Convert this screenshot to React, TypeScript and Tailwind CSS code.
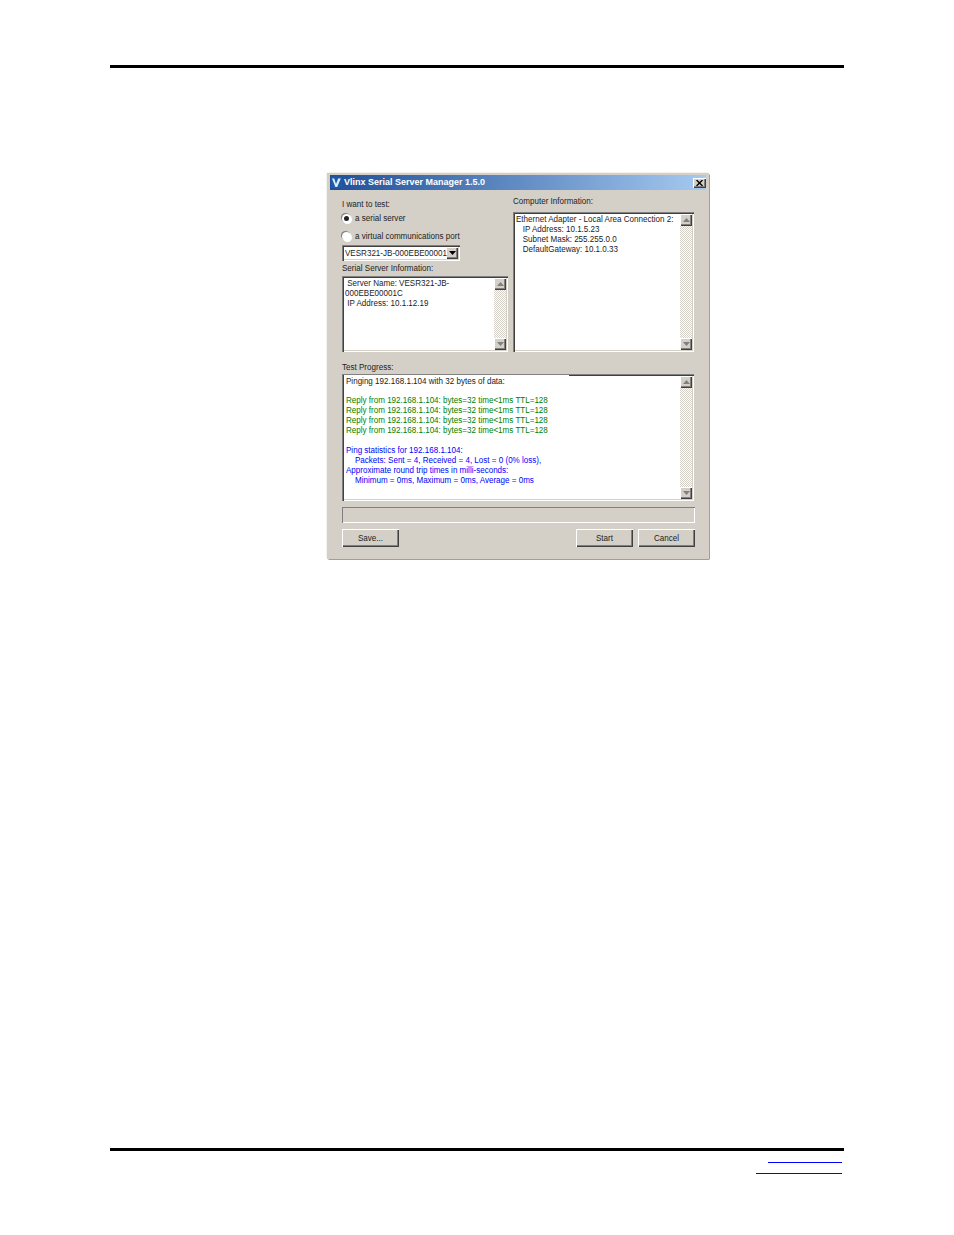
import type { ReactNode } from 'react';

const sunken = 'bg-white shadow-[inset_1px_1px_0_#808080,inset_2px_2px_0_#404040,inset_-1px_-1px_0_#ffffff,inset_-2px_-2px_0_#d4d0c8]';
const raised = 'bg-[#d4d0c8] shadow-[inset_1px_1px_0_#ffffff,inset_-1px_-1px_0_#404040,inset_-2px_-2px_0_#808080]';
const tall = 'scale-y-[1.15] leading-[10px]';
const label = 'translate-y-[1px] scale-y-[1.15] leading-[10px]';

function Arrow({ up = false, dark = false }: { up?: boolean; dark?: boolean }) {
  return (
    <svg width="7" height="4" viewBox="0 0 7 4" className={dark ? 'text-black' : 'text-[#808080]'}>
      <path d={up ? 'M3.5 0L7 4H0z' : 'M0 0h7L3.5 4z'} fill="currentColor" />
    </svg>
  );
}

function ScrollBar() {
  return (
    <div className="flex w-[12px] shrink-0 flex-col bg-[repeating-conic-gradient(#ffffff_0_25%,#d4d0c8_0_50%)] bg-[length:2px_2px]">
      <div className={`flex h-[12px] items-center justify-center ${raised}`}>
        <Arrow up />
      </div>
      <div className="flex-1" />
      <div className={`flex h-[12px] items-center justify-center ${raised}`}>
        <Arrow />
      </div>
    </div>
  );
}

function TextBox({ className, textClass = 'pl-[1px] pt-[1px]', children }: { className: string; textClass?: string; children: ReactNode }) {
  return (
    <div className={`flex p-[2px] ${sunken} ${className}`}>
      <div className={`min-w-0 flex-1 ${textClass}`}>{children}</div>
      <ScrollBar />
    </div>
  );
}

function Line({ children }: { children?: ReactNode }) {
  return <div className={`h-[9.9px] whitespace-pre ${tall}`}>{children}</div>;
}

function Radio({ checked = false }: { checked?: boolean }) {
  return (
    <div className="flex h-[9px] w-[9px] items-center justify-center rounded-full bg-white shadow-[-1px_-1px_0_#808080,1px_1px_0_#ffffff]">
      {checked && <div className="h-[5px] w-[5px] rounded-full bg-[#222]" />}
    </div>
  );
}

function Button({ text }: { text: string }) {
  return (
    <button className={`flex h-[18px] w-[57px] items-center justify-center text-[#222] ${raised}`}>
      <span className={label}>{text}</span>
    </button>
  );
}

function Dialog() {
  return (
    <div className="ml-[327px] mt-[105px] h-[386px] w-[382px] border-[3px] border-[#d4d0c8] bg-[#d4d0c8] font-['Liberation_Sans',sans-serif] text-[8.05px] text-[#222] shadow-[1px_1px_0_-0.5px_#404040,-1px_-1px_0_-0.5px_#e8e6e0]">
      <div className="mt-[-1px] flex h-[15px] items-center bg-gradient-to-r from-[#1f4f96] to-[#a6caf0] pl-[1px]">
        <svg width="11" height="11" viewBox="0 0 11 11" className="shrink-0">
          <rect width="11" height="11" fill="#1f5aa8" />
          <path d="M1 1.5h2.2L5 7l2.2-5.5h2.6L6.2 10H4.4z" fill="#d8f0ff" />
        </svg>
        <span className="ml-[2px] text-[9px] font-bold text-white">Vlinx Serial Server Manager 1.5.0</span>
        <div className={`ml-auto flex h-[10px] w-[13px] items-center justify-center ${raised}`}>
          <svg width="7" height="6" viewBox="0 0 7 6">
            <path d="M0.5 0L6.5 6M6.5 0L0.5 6" stroke="#000000" strokeWidth="1.4" />
          </svg>
        </div>
      </div>

      <div className="flex gap-[5px] pl-[12px] pr-[12px]">
        <div className="w-[166px] shrink-0">
          <div className={`mt-[10px] h-[10px] ${tall}`}>I want to test:</div>
          <div className="mt-[3px] flex h-[10px] items-center gap-[4px]">
            <Radio checked />
            <span className={label}>a serial server</span>
          </div>
          <div className="mt-[8px] flex h-[10px] items-center gap-[4px]">
            <Radio />
            <span className={label}>a virtual communications port</span>
          </div>
          <div className={`mt-[4px] flex h-[16px] w-[118px] items-center p-[2px] ${sunken}`}>
            <span className={`min-w-0 flex-1 whitespace-nowrap pl-[1px] ${label}`}>VESR321-JB-000EBE00001</span>
            <div className={`flex h-[12px] w-[12px] shrink-0 items-center justify-center ${raised}`}>
              <Arrow dark />
            </div>
          </div>
          <div className={`mt-[2px] h-[10px] ${label}`}>Serial Server Information:</div>
          <TextBox className="mt-[3px] h-[76px]">
            <Line>{' Server Name: VESR321-JB-'}</Line>
            <Line>000EBE00001C</Line>
            <Line>{' IP Address: 10.1.12.19'}</Line>
          </TextBox>
        </div>
        <div className="min-w-0 flex-1">
          <div className={`mt-[6px] h-[10px] ${label}`}>Computer Information:</div>
          <TextBox className="mt-[6px] h-[140px]">
            <Line>Ethernet Adapter - Local Area Connection 2:</Line>
            <Line>{'   IP Address: 10.1.5.23'}</Line>
            <Line>{'   Subnet Mask: 255.255.0.0'}</Line>
            <Line>{'   DefaultGateway: 10.1.0.33'}</Line>
          </TextBox>
        </div>
      </div>

      <div className="pl-[12px] pr-[11px]">
        <div className={`mt-[10px] h-[10px] ${label}`}>Test Progress:</div>
        <TextBox className="relative mr-[1px] mt-[2px] h-[127px]" textClass="pl-[2px] pt-[0.6px]">
          <div className="absolute left-[2px] top-[1px] h-[1px] w-[225px] bg-white" />
          <Line>Pinging 192.168.1.104 with 32 bytes of data:</Line>
          <Line />
          <div className="text-[#008000]">
            <Line>Reply from 192.168.1.104: bytes=32 time&lt;1ms TTL=128</Line>
            <Line>Reply from 192.168.1.104: bytes=32 time&lt;1ms TTL=128</Line>
            <Line>Reply from 192.168.1.104: bytes=32 time&lt;1ms TTL=128</Line>
            <Line>Reply from 192.168.1.104: bytes=32 time&lt;1ms TTL=128</Line>
          </div>
          <Line />
          <div className="text-[#0000ff]">
            <Line>Ping statistics for 192.168.1.104:</Line>
            <Line>{'    Packets: Sent = 4, Received = 4, Lost = 0 (0% loss),'}</Line>
            <Line>Approximate round trip times in milli-seconds:</Line>
            <Line>{'    Minimum = 0ms, Maximum = 0ms, Average = 0ms'}</Line>
          </div>
        </TextBox>
        <div className="mt-[6px] h-[16px] shadow-[inset_1px_1px_0_#808080,inset_-1px_-1px_0_#ffffff]" />
        <div className="mt-[6px] flex gap-[5px]">
          <Button text="Save..." />
          <div className="flex-1" />
          <Button text="Start" />
          <Button text="Cancel" />
        </div>
      </div>
    </div>
  );
}

export default function App() {
  return (
    <div className="h-[1235px] w-[954px] bg-white pt-[65px]">
      <div className="mx-[110px] h-[3px] bg-black" />
      <Dialog />
      <div className="mx-[110px] mt-[589px] h-[3px] bg-black" />
      <div className="ml-[768px] mt-[11px] h-[1px] w-[74px] bg-[#0000ff]" />
      <div className="ml-[756px] mt-[10px] h-[1px] w-[86px] bg-[#0000ff]" />
    </div>
  );
}
